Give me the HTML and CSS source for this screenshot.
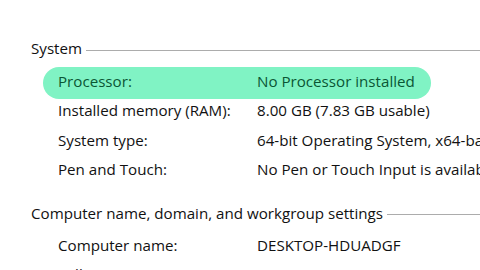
FILE: index.html
```html
<!DOCTYPE html>
<html>
<head>
<meta charset="utf-8">
<link rel="stylesheet" href="styles.css">
</head>
<body>
<div class="page">
  <div class="section-head">
    <span class="section-title">System</span>
    <span class="rule"></span>
  </div>
  <div class="rows">
    <div class="row row-hl"><span class="label">Processor:</span><span class="value">No Processor installed</span></div>
    <div class="row row-after-hl"><span class="label">Installed memory (RAM):</span><span class="value">8.00 GB (7.83 GB usable)</span></div>
    <div class="row"><span class="label">System type:</span><span class="value">64-bit Operating System, x64-based processor</span></div>
    <div class="row"><span class="label">Pen and Touch:</span><span class="value">No Pen or Touch Input is available for this Display</span></div>
  </div>
  <div class="section-head section-head-2">
    <span class="section-title">Computer name, domain, and workgroup settings</span>
    <span class="rule"></span>
  </div>
  <div class="rows rows-2">
    <div class="row"><span class="label">Computer name:</span><span class="value">DESKTOP-HDUADGF</span></div>
    <div class="row"><span class="label">Full computer name:</span><span class="value">DESKTOP-HDUADGF</span></div>
  </div>
</div>
</body>
</html>
```
FILE: styles.css
```css
html, body {
  margin: 0;
  padding: 0;
  background: #ffffff;
  width: 480px;
  height: 270px;
  overflow: hidden;
}
.page {
  font-family: "Open Sans", "Noto Sans", sans-serif;
  font-size: 15.15px;
  color: #111111;
  padding: 38px 0 0 31px;
  white-space: nowrap;
}
.section-head {
  display: flex;
  align-items: center;
  height: 20px;
  line-height: 20px;
}
.section-title {
  flex: none;
}
.rule {
  flex: 1;
  height: 1px;
  background: #acacac;
  margin-left: 4px;
  margin-top: 4px;
}
.rows {
  padding-left: 12px;
  margin-top: 9px;
}
.row {
  display: grid;
  grid-template-columns: 199px auto;
  width: max-content;
  height: 29.5px;
  line-height: 29.5px;
  padding: 0 18px 0 15px;
}
.row-hl {
  height: 29px;
  padding-bottom: 3px;
  padding-right: 16px;
  background: #80f3c4;
  border-radius: 16px;
  color: #0a5634;
}
.row-after-hl {
  margin-top: -3px;
}
.section-head-2 {
  margin-top: 18px;
}
.rows-2 {
  margin-top: 8px;
}
```
